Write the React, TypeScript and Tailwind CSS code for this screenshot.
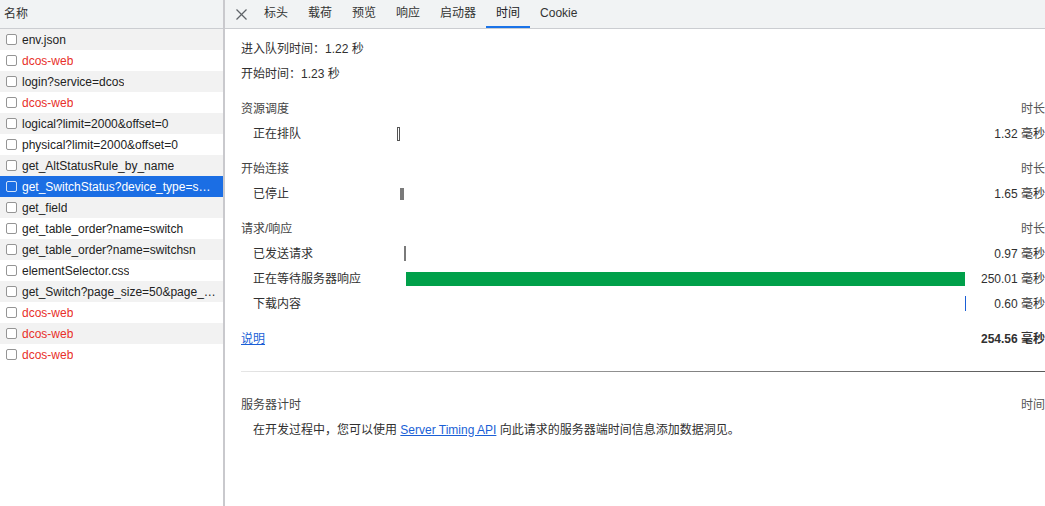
import React from "react";

type Req = { name: string; error?: boolean };

const requests: Req[] = [
  { name: "env.json" },
  { name: "dcos-web", error: true },
  { name: "login?service=dcos" },
  { name: "dcos-web", error: true },
  { name: "logical?limit=2000&offset=0" },
  { name: "physical?limit=2000&offset=0" },
  { name: "get_AltStatusRule_by_name" },
  { name: "get_SwitchStatus?device_type=switch&page_size=50" },
  { name: "get_field" },
  { name: "get_table_order?name=switch" },
  { name: "get_table_order?name=switchsn" },
  { name: "elementSelector.css" },
  { name: "get_Switch?page_size=50&page_num=1" },
  { name: "dcos-web", error: true },
  { name: "dcos-web", error: true },
  { name: "dcos-web", error: true },
];

const SELECTED = 7;
const TOTAL = 254.56;

type Phase = {
  label: string;
  ms: number;
  kind: "hollow" | "gray" | "line" | "green" | "blue";
};

const sections: { title: string; phases: Phase[] }[] = [
  { title: "资源调度", phases: [{ label: "正在排队", ms: 1.32, kind: "hollow" }] },
  { title: "开始连接", phases: [{ label: "已停止", ms: 1.65, kind: "gray" }] },
  {
    title: "请求/响应",
    phases: [
      { label: "已发送请求", ms: 0.97, kind: "line" },
      { label: "正在等待服务器响应", ms: 250.01, kind: "green" },
      { label: "下载内容", ms: 0.6, kind: "blue" },
    ],
  },
];

const barClass: Record<Phase["kind"], string> = {
  hollow: "h-[14px] border border-[#555] min-w-[3px]",
  gray: "h-[12px] bg-[#7a7a7a] min-w-[3px]",
  line: "h-[15px] bg-[#7a7a7a] min-w-[1px]",
  green: "h-[14px] bg-[#00a04a]",
  blue: "h-[15px] bg-[#1a5fd6] min-w-[1px]",
};

const Checkbox = ({ selected }: { selected: boolean }) => (
  <span
    className={
      "w-[11px] h-[11px] rounded-[2px] border shrink-0 " +
      (selected ? "border-white/80" : "border-[#959595] bg-white")
    }
  />
);

const tabs = ["标头", "载荷", "预览", "响应", "启动器", "时间", "Cookie"];

export default function App() {
  let offset = 0;

  return (
    <div
      className="flex w-[1045px] h-[506px] overflow-hidden bg-white text-[12px] text-[#222]"
      style={{ fontFamily: '"Liberation Sans", "Noto Sans CJK SC", sans-serif' }}
    >
      {/* request list */}
      <div className="w-[225px] shrink-0 border-r-2 border-[#c9c9cd] flex flex-col">
        <div className="h-[29px] shrink-0 bg-[#f1f3f4] border-b border-[#cbcdd1] flex items-center px-[4px] text-[#333]">
          名称
        </div>
        {requests.map((r, i) => {
          const selected = i === SELECTED;
          const bg = selected ? "bg-[#1b6ee4]" : i % 2 === 0 ? "bg-[#f2f2f2]" : "bg-white";
          const color = selected ? "text-white" : r.error ? "text-[#e8302a]" : "text-[#222]";
          return (
            <div key={i} className={"h-[21px] flex items-center gap-[5px] pl-[6px] pr-[6px] " + bg}>
              <Checkbox selected={selected} />
              <span className={"truncate " + color}>{r.name}</span>
            </div>
          );
        })}
      </div>

      {/* detail panel */}
      <div className="flex-1 flex flex-col min-w-0">
        <div className="h-[29px] shrink-0 bg-[#f1f3f4] border-b border-[#cbcdd1] flex items-stretch">
          <div className="w-[29px] flex items-center pl-[11px]">
            <svg width="11" height="11" viewBox="0 0 11 11" stroke="#5f6368" strokeWidth="1.3">
              <line x1="0.5" y1="0.5" x2="10.5" y2="10.5" />
              <line x1="10.5" y1="0.5" x2="0.5" y2="10.5" />
            </svg>
          </div>
          {tabs.map((t) => (
            <div
              key={t}
              className={
                "px-[10px] flex items-center border-b-2 " +
                (t === "时间" ? "border-[#1a73e8] text-[#202124]" : "border-transparent text-[#333]")
              }
            >
              {t}
            </div>
          ))}
        </div>

        <div className="pl-[16px] pt-[7px] text-[#303030]">
          <div className="h-[25px] flex items-center">进入队列时间：1.22 秒</div>
          <div className="h-[25px] flex items-center">开始时间：1.23 秒</div>

          {sections.map((s) => (
            <div key={s.title} className="mt-[10px]">
              <div className="h-[25px] flex items-center justify-between text-[#444]">
                <span>{s.title}</span>
                <span className="text-[#555]">时长</span>
              </div>
              {s.phases.map((p) => {
                const left = (offset / TOTAL) * 100;
                const width = (p.ms / TOTAL) * 100;
                offset += p.ms;
                return (
                  <div key={p.label} className="h-[25px] grid grid-cols-[156px_1fr_79px] items-center">
                    <span className="pl-[12px]">{p.label}</span>
                    <div className="relative h-full flex items-center">
                      <div
                        className={"absolute " + barClass[p.kind]}
                        style={{ left: `${left}%`, width: `${width}%` }}
                      />
                    </div>
                    <span className="text-right">{p.ms.toFixed(2)} 毫秒</span>
                  </div>
                );
              })}
            </div>
          ))}

          <div className="mt-[10px] h-[25px] flex items-center justify-between">
            <a className="text-[#1a5fd6] underline">说明</a>
            <span className="font-bold">{TOTAL.toFixed(2)} 毫秒</span>
          </div>

          <div className="mt-[20px] h-px bg-gradient-to-r from-[#e6e6e6] via-[#8a8a8a] to-[#5a5a5a]" />

          <div className="mt-[20px] h-[25px] flex items-center justify-between text-[#444]">
            <span>服务器计时</span>
            <span className="text-[#555]">时间</span>
          </div>
          <div className="h-[25px] flex items-center pl-[12px]">
            在开发过程中，您可以使用&nbsp;
            <a className="text-[#1a5fd6] underline">Server Timing API</a>
            &nbsp;向此请求的服务器端时间信息添加数据洞见。
          </div>
        </div>
      </div>
    </div>
  );
}
